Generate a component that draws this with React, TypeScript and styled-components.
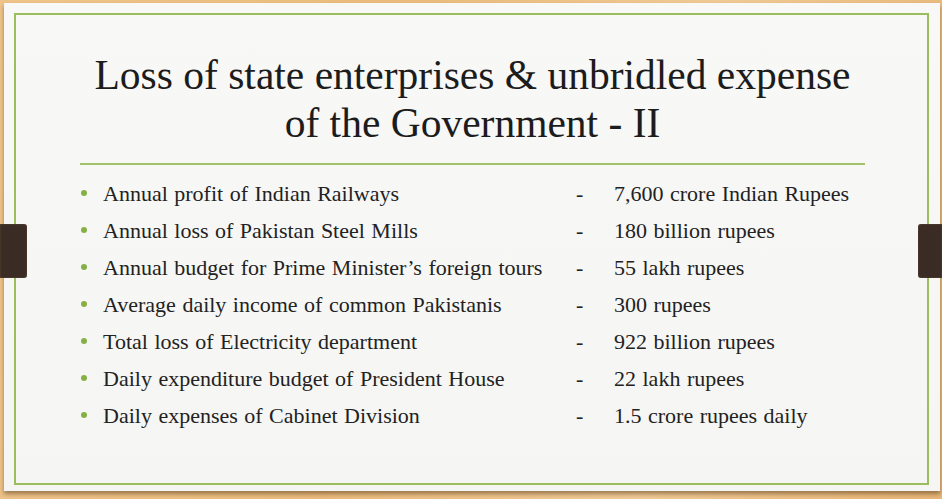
import React from "react";
import styled, { createGlobalStyle } from "styled-components";

const Global = createGlobalStyle`
  html, body { margin: 0; padding: 0; }
  body { width: 942px; height: 499px; overflow: hidden; }
`;

const Page = styled.div`
  position: relative;
  width: 942px;
  height: 499px;
  box-sizing: border-box;
  padding: 3px 2px 8px 4px;
  background: linear-gradient(100deg, #efc48a 0%, #e9bb7d 40%, #f0c994 70%, #e6b576 100%);
  font-family: "Liberation Serif", "DejaVu Serif", serif;
`;

const Card = styled.div`
  height: 100%;
  box-sizing: border-box;
  padding: 10px 11px 6px 10px;
  background: linear-gradient(180deg, #f8f8f7 0%, #f5f5f3 100%);
  box-shadow: 0 3px 4px rgba(60, 35, 10, 0.45);
`;

const Frame = styled.div`
  height: 100%;
  box-sizing: border-box;
  border: 2px solid #9cbd5c;
  padding: 36px 62px 0 64px;
  display: flex;
  flex-direction: column;
`;

const Title = styled.h1`
  margin: 0;
  text-align: center;
  font-weight: normal;
  font-size: 41.5px;
  line-height: 48px;
  color: #1c1c1c;
`;

const Rule = styled.div`
  height: 2px;
  background: #a4c26b;
  margin: 16px 0 10px 0;
`;

const List = styled.ul`
  list-style: none;
  margin: 0;
  padding: 0 0 0 1px;
`;

const Row = styled.li`
  display: grid;
  grid-template-columns: 22px 473px 38px auto;
  align-items: center;
  height: 37px;
  font-size: 22px;
  color: #222;
  word-spacing: 1px;
`;

const Bullet = styled.span`
  width: 6px;
  height: 6px;
  border-radius: 50%;
  background: #86b043;
  margin-top: -2px;
`;

const Cell = styled.span`
  white-space: nowrap;
`;

const Tab = styled.div<{ side: "left" | "right" }>`
  position: absolute;
  top: 224px;
  ${(p) => (p.side === "left" ? "left: 0; border-radius: 0 3px 3px 0;" : "right: 0; border-radius: 3px 0 0 3px;")}
  width: ${(p) => (p.side === "left" ? 27 : 24)}px;
  height: 54px;
  background: #3a2c24;
  box-shadow: inset 0 0 2px rgba(120, 90, 60, 0.8);
`;

const rows: [string, string][] = [
  ["Annual profit of Indian Railways", "7,600 crore Indian Rupees"],
  ["Annual loss of Pakistan Steel Mills", "180 billion rupees"],
  ["Annual budget for Prime Minister\u2019s foreign tours", "55 lakh rupees"],
  ["Average daily income of common Pakistanis", "300 rupees"],
  ["Total loss of Electricity department", "922 billion rupees"],
  ["Daily expenditure budget of President House", "22 lakh rupees"],
  ["Daily expenses of Cabinet Division", "1.5 crore rupees daily"],
];

export default function App() {
  return (
    <>
      <Global />
      <Page>
        <Card>
          <Frame>
            <Title>
              Loss of state enterprises &amp; unbridled expense
              <br />
              of the Government - II
            </Title>
            <Rule />
            <List>
              {rows.map(([label, value]) => (
                <Row key={label}>
                  <Bullet />
                  <Cell>{label}</Cell>
                  <Cell>-</Cell>
                  <Cell>{value}</Cell>
                </Row>
              ))}
            </List>
          </Frame>
        </Card>
        <Tab side="left" />
        <Tab side="right" />
      </Page>
    </>
  );
}
